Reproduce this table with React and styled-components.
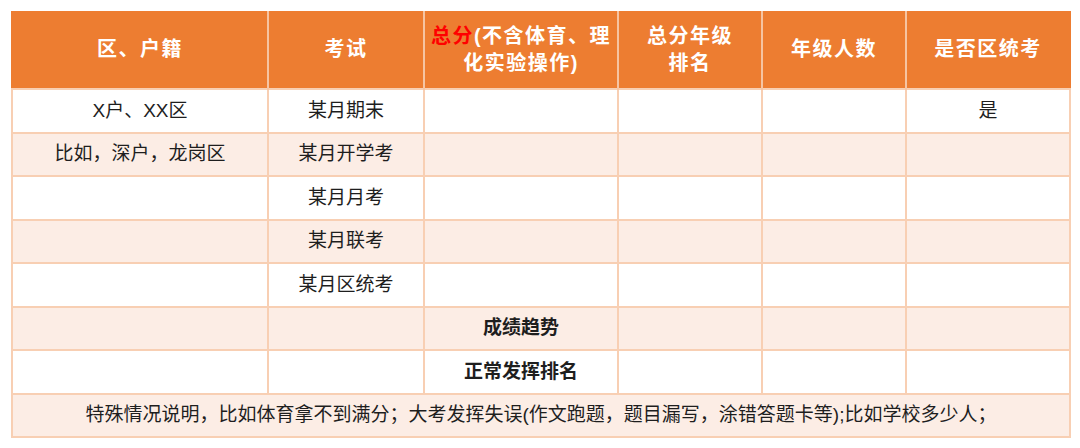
import React from 'react';
import styled, { createGlobalStyle } from 'styled-components';

const GlobalStyle = createGlobalStyle`
  html, body {
    margin: 0;
    padding: 0;
    background: #ffffff;
    font-family: "Liberation Sans", "Noto Sans CJK SC", sans-serif;
  }
`;

const columns = [256, 156, 194, 144, 144, 164];

const rows = [
  ['X户、XX区', '某月期末', '', '', '', '是'],
  ['比如，深户，龙岗区', '某月开学考', '', '', '', ''],
  ['', '某月月考', '', '', '', ''],
  ['', '某月联考', '', '', '', ''],
  ['', '某月区统考', '', '', '', ''],
  ['', '', { bold: '成绩趋势' }, '', '', ''],
  ['', '', { bold: '正常发挥排名' }, '', '', ''],
];

const App = () => {
  return (
    <>
      <GlobalStyle />
      <Page>
        <Table>
          <colgroup>
            {columns.map((w, i) => (
              <col key={i} style={{ width: w }} />
            ))}
          </colgroup>
          <thead>
            <tr>
              <Th>区、户籍</Th>
              <Th>考试</Th>
              <Th>
                <Red>总分</Red>(不含体育、理
                <br />
                化实验操作)
              </Th>
              <Th>
                总分年级
                <br />
                排名
              </Th>
              <Th>年级人数</Th>
              <Th>是否区统考</Th>
            </tr>
          </thead>
          <tbody>
            {rows.map((row, r) => (
              <Row key={r} $shade={r % 2 === 1}>
                {row.map((cell, c) => (
                  <Td key={c}>
                    {typeof cell === 'object' ? <Bold>{cell.bold}</Bold> : cell}
                  </Td>
                ))}
              </Row>
            ))}
            <Row $shade>
              <Td colSpan={6}>
                特殊情况说明，比如体育拿不到满分；大考发挥失误(作文跑题，题目漏写，涂错答题卡等);比如学校多少人；
              </Td>
            </Row>
          </tbody>
        </Table>
      </Page>
    </>
  );
};

const Page = styled.div`
  padding: 11px 0 0 11px;
`;

const Table = styled.table`
  width: 1058px;
  table-layout: fixed;
  border-collapse: collapse;
  border: 2px solid #ed7d31;
  border-top: none;
`;

const Th = styled.th`
  height: 77px;
  padding: 0;
  background: #ed7d31;
  color: #ffffff;
  font-size: 20px;
  font-weight: 700;
  line-height: 27px;
  letter-spacing: 1.5px;
  text-align: center;
  vertical-align: middle;
  border-left: 2px solid #f6c4a2;

  &:first-child {
    border-left: none;
  }
`;

const Red = styled.span`
  color: #ff0000;
`;

const Row = styled.tr`
  background: ${({ $shade }) => ($shade ? '#fcede5' : '#ffffff')};
`;

const Td = styled.td`
  height: 41.5px;
  padding: 0;
  border: 2px solid #f8cfb3;
  color: #1e1e1e;
  font-size: 19px;
  line-height: 22px;
  text-align: center;
  vertical-align: middle;
`;

const Bold = styled.span`
  font-weight: 700;
`;

export default App;
